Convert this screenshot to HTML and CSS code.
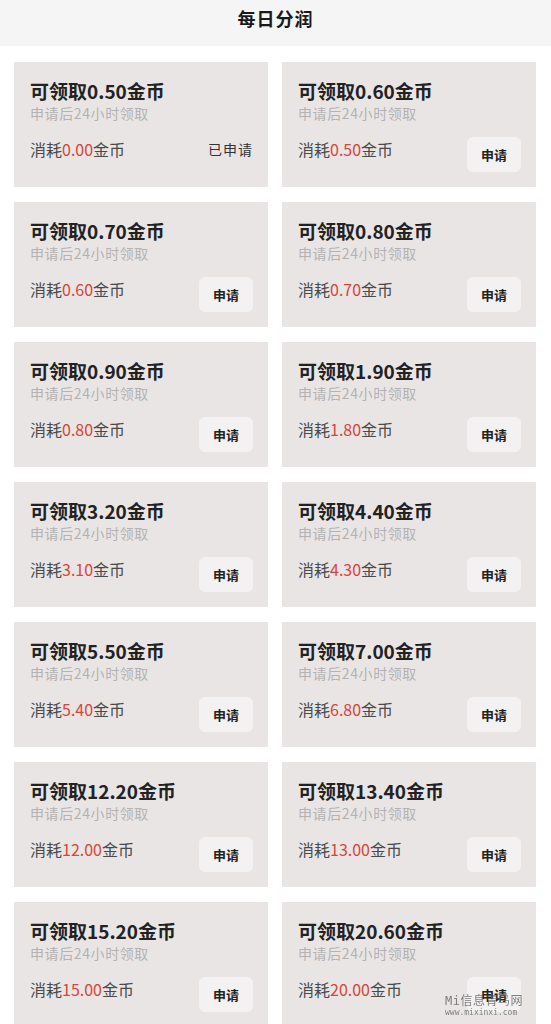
FILE: index.html
```html
<!DOCTYPE html>
<html lang="zh-CN">
<head>
    <meta charset="UTF-8">
    <meta name="viewport" content="width=device-width, initial-scale=1.0">
    <title>每日分润</title>
    <link rel="stylesheet" href="styles.css">
</head>
<body>
    <header class="top-bar">
        <h1>每日分润</h1>
    </header>

    <main class="card-grid">
        <div class="card">
            <p class="card-title">可领取0.50金币</p>
            <p class="card-note">申请后24小时领取</p>
            <div class="card-foot">
                <span class="cost">消耗<em>0.00</em>金币</span>
                <span class="applied">已申请</span>
            </div>
        </div>
        <div class="card">
            <p class="card-title">可领取0.60金币</p>
            <p class="card-note">申请后24小时领取</p>
            <div class="card-foot">
                <span class="cost">消耗<em>0.50</em>金币</span>
                <button class="apply-btn">申请</button>
            </div>
        </div>

        <div class="card">
            <p class="card-title">可领取0.70金币</p>
            <p class="card-note">申请后24小时领取</p>
            <div class="card-foot">
                <span class="cost">消耗<em>0.60</em>金币</span>
                <button class="apply-btn">申请</button>
            </div>
        </div>
        <div class="card">
            <p class="card-title">可领取0.80金币</p>
            <p class="card-note">申请后24小时领取</p>
            <div class="card-foot">
                <span class="cost">消耗<em>0.70</em>金币</span>
                <button class="apply-btn">申请</button>
            </div>
        </div>

        <div class="card">
            <p class="card-title">可领取0.90金币</p>
            <p class="card-note">申请后24小时领取</p>
            <div class="card-foot">
                <span class="cost">消耗<em>0.80</em>金币</span>
                <button class="apply-btn">申请</button>
            </div>
        </div>
        <div class="card">
            <p class="card-title">可领取1.90金币</p>
            <p class="card-note">申请后24小时领取</p>
            <div class="card-foot">
                <span class="cost">消耗<em>1.80</em>金币</span>
                <button class="apply-btn">申请</button>
            </div>
        </div>

        <div class="card">
            <p class="card-title">可领取3.20金币</p>
            <p class="card-note">申请后24小时领取</p>
            <div class="card-foot">
                <span class="cost">消耗<em>3.10</em>金币</span>
                <button class="apply-btn">申请</button>
            </div>
        </div>
        <div class="card">
            <p class="card-title">可领取4.40金币</p>
            <p class="card-note">申请后24小时领取</p>
            <div class="card-foot">
                <span class="cost">消耗<em>4.30</em>金币</span>
                <button class="apply-btn">申请</button>
            </div>
        </div>

        <div class="card">
            <p class="card-title">可领取5.50金币</p>
            <p class="card-note">申请后24小时领取</p>
            <div class="card-foot">
                <span class="cost">消耗<em>5.40</em>金币</span>
                <button class="apply-btn">申请</button>
            </div>
        </div>
        <div class="card">
            <p class="card-title">可领取7.00金币</p>
            <p class="card-note">申请后24小时领取</p>
            <div class="card-foot">
                <span class="cost">消耗<em>6.80</em>金币</span>
                <button class="apply-btn">申请</button>
            </div>
        </div>

        <div class="card">
            <p class="card-title">可领取12.20金币</p>
            <p class="card-note">申请后24小时领取</p>
            <div class="card-foot">
                <span class="cost">消耗<em>12.00</em>金币</span>
                <button class="apply-btn">申请</button>
            </div>
        </div>
        <div class="card">
            <p class="card-title">可领取13.40金币</p>
            <p class="card-note">申请后24小时领取</p>
            <div class="card-foot">
                <span class="cost">消耗<em>13.00</em>金币</span>
                <button class="apply-btn">申请</button>
            </div>
        </div>

        <div class="card">
            <p class="card-title">可领取15.20金币</p>
            <p class="card-note">申请后24小时领取</p>
            <div class="card-foot">
                <span class="cost">消耗<em>15.00</em>金币</span>
                <button class="apply-btn">申请</button>
            </div>
        </div>
        <div class="card">
            <p class="card-title">可领取20.60金币</p>
            <p class="card-note">申请后24小时领取</p>
            <div class="card-foot">
                <span class="cost">消耗<em>20.00</em>金币</span>
                <button class="apply-btn">申请</button>
            </div>
        </div>
    </main>

    <!-- 水印 -->
    <div class="watermark">
        <span class="wm-name">Mi信息青鸟网</span>
        <span class="wm-url">www.mixinxi.com</span>
    </div>
</body>
</html>
```

FILE: styles.css
```css
/* 基础样式 */
body {
    margin: 0;
    background-color: #ffffff;
    font-family: "Noto Sans CJK SC", "Noto Sans", sans-serif;
    color: #222222;
}

p {
    margin: 0;
}

/* 顶部标题栏 */
.top-bar {
    height: 46px;
    background-color: #f5f5f5;
    display: flex;
    justify-content: center;
    align-items: flex-start;
}
.top-bar h1 {
    margin: 6px 0 0;
    font-size: 18px;
    line-height: 24px;
    font-weight: 700;
    letter-spacing: 1px;
    color: #1a1a1a;
}

/* 卡片列表 */
.card-grid {
    display: grid;
    grid-template-columns: 1fr 1fr;
    column-gap: 14px;
    row-gap: 15px;
    padding: 16px 15px 16px 14px;
}

.card {
    background-color: #e9e5e5;
    padding: 16px 15px 15px 16px;
    display: flex;
    flex-direction: column;
}

.card-title {
    font-size: 19px;
    line-height: 26px;
    font-weight: 700;
    color: #222222;
}

.card-note {
    font-size: 14px;
    line-height: 18px;
    color: #b4b2b2;
    letter-spacing: 0.6px;
}

.card-foot {
    margin-top: 15px;
    display: flex;
    justify-content: space-between;
    align-items: flex-start;
    height: 35px;
}

.cost {
    font-size: 16px;
    line-height: 24px;
    color: #4a4a4a;
}
.cost em {
    font-style: normal;
    color: #db4437;
}

.applied {
    font-size: 14px;
    line-height: 24px;
    letter-spacing: 1px;
    color: #333333;
}

.apply-btn {
    width: 54px;
    height: 35px;
    border: none;
    border-radius: 6px;
    background-color: #f3f1f1;
    font-family: inherit;
    font-size: 13px;
    font-weight: 700;
    color: #222222;
    cursor: pointer;
}

/* 水印 */
.watermark {
    position: fixed;
    left: 445px;
    top: 994px;
    display: flex;
    flex-direction: column;
    font-family: "DejaVu Sans Mono", "Noto Sans CJK SC", monospace;
    color: rgba(90, 90, 90, 0.75);
    pointer-events: none;
}
.wm-name {
    font-size: 12px;
    line-height: 14px;
    letter-spacing: 0.5px;
}
.wm-url {
    font-size: 8px;
    line-height: 10px;
}
```
